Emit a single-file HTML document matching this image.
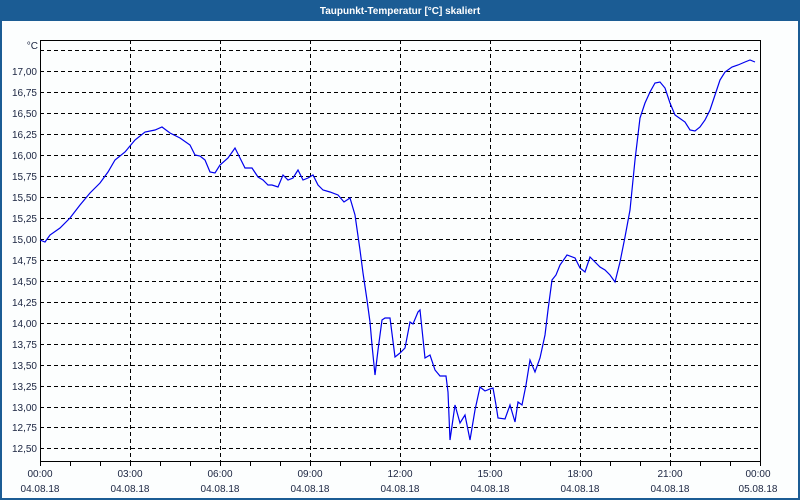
<!DOCTYPE html>
<html><head><meta charset="utf-8"><style>
html,body{margin:0;padding:0;width:800px;height:500px;overflow:hidden;background:#fff}
svg text{font-family:"Liberation Sans","DejaVu Sans",sans-serif;font-size:10px;fill:#1a2440}
</style></head><body>
<svg width="800" height="500" xmlns="http://www.w3.org/2000/svg">
<rect x="0" y="0" width="800" height="500" fill="#1b5c94"/>
<rect x="2" y="21" width="796" height="477" fill="#fcfefe"/>
<text x="400" y="14" text-anchor="middle" style="fill:#fff;font-weight:bold;font-size:10px">Taupunkt-Temperatur [°C] skaliert</text>
<g stroke="#000" stroke-dasharray="4,3" stroke-width="1">
<line x1="40" x2="760" y1="50.5" y2="50.5"/>
<line x1="40" x2="760" y1="71.5" y2="71.5"/>
<line x1="40" x2="760" y1="92.5" y2="92.5"/>
<line x1="40" x2="760" y1="113.5" y2="113.5"/>
<line x1="40" x2="760" y1="134.5" y2="134.5"/>
<line x1="40" x2="760" y1="155.5" y2="155.5"/>
<line x1="40" x2="760" y1="176.5" y2="176.5"/>
<line x1="40" x2="760" y1="197.5" y2="197.5"/>
<line x1="40" x2="760" y1="218.5" y2="218.5"/>
<line x1="40" x2="760" y1="239.5" y2="239.5"/>
<line x1="40" x2="760" y1="260.5" y2="260.5"/>
<line x1="40" x2="760" y1="281.5" y2="281.5"/>
<line x1="40" x2="760" y1="302.5" y2="302.5"/>
<line x1="40" x2="760" y1="323.5" y2="323.5"/>
<line x1="40" x2="760" y1="344.5" y2="344.5"/>
<line x1="40" x2="760" y1="365.5" y2="365.5"/>
<line x1="40" x2="760" y1="386.5" y2="386.5"/>
<line x1="40" x2="760" y1="407.5" y2="407.5"/>
<line x1="40" x2="760" y1="427.5" y2="427.5"/>
<line x1="40" x2="760" y1="448.5" y2="448.5"/>
<line y1="40" y2="461" x1="130.5" x2="130.5"/>
<line y1="40" y2="461" x1="220.5" x2="220.5"/>
<line y1="40" y2="461" x1="310.5" x2="310.5"/>
<line y1="40" y2="461" x1="400.5" x2="400.5"/>
<line y1="40" y2="461" x1="490.5" x2="490.5"/>
<line y1="40" y2="461" x1="580.5" x2="580.5"/>
<line y1="40" y2="461" x1="670.5" x2="670.5"/>
</g>
<rect x="40.5" y="40.5" width="720" height="421" fill="none" stroke="#000"/>
<g stroke="#000">
<path d="M70.5 461v5M100.5 461v5M130.5 461v5M160.5 461v5M190.5 461v5M220.5 461v5M250.5 461v5M280.5 461v5M310.5 461v5M340.5 461v5M370.5 461v5M400.5 461v5M430.5 461v5M460.5 461v5M490.5 461v5M520.5 461v5M550.5 461v5M580.5 461v5M610.5 461v5M640.5 461v5M670.5 461v5M700.5 461v5M730.5 461v5M760.5 461v5M40.5 461v5"/>
</g>
<g text-anchor="end">
<text x="38" y="49">°C</text>
<text x="37" y="75">17,00</text><text x="37" y="96">16,75</text><text x="37" y="117">16,50</text><text x="37" y="138">16,25</text><text x="37" y="159">16,00</text><text x="37" y="180">15,75</text><text x="37" y="201">15,50</text><text x="37" y="222">15,25</text><text x="37" y="243">15,00</text><text x="37" y="264">14,75</text><text x="37" y="285">14,50</text><text x="37" y="306">14,25</text><text x="37" y="327">14,00</text><text x="37" y="348">13,75</text><text x="37" y="369">13,50</text><text x="37" y="390">13,25</text><text x="37" y="411">13,00</text><text x="37" y="431">12,75</text><text x="37" y="452">12,50</text>
</g>
<g text-anchor="middle">
<text x="40" y="477">00:00</text><text x="40" y="492">04.08.18</text>
<text x="130" y="477">03:00</text><text x="130" y="492">04.08.18</text>
<text x="220" y="477">06:00</text><text x="220" y="492">04.08.18</text>
<text x="310" y="477">09:00</text><text x="310" y="492">04.08.18</text>
<text x="400" y="477">12:00</text><text x="400" y="492">04.08.18</text>
<text x="490" y="477">15:00</text><text x="490" y="492">04.08.18</text>
<text x="580" y="477">18:00</text><text x="580" y="492">04.08.18</text>
<text x="670" y="477">21:00</text><text x="670" y="492">04.08.18</text>
<text x="758" y="477">00:00</text><text x="758" y="492">05.08.18</text>
</g>
<polyline fill="none" stroke="#0000ee" stroke-width="1.2" points="40,240 45,242 50,235 60,228 70,218 80,205 90,193 100,183 108,172 115,160 125,152 135,140 145,132 155,130 162,127 170,133 180,138 190,145 195,155 200,156 205,160 210,172 215,173 220,165 228,158 235,148 240,158 245,168 252,168 258,177 263,180 268,185 272,185 278,187 283,175 288,180 293,178 298,170 303,180 308,178 313,175 318,185 323,190 330,192 338,195 344,202 350,198 355,215 360,250 363,273 367,300 370,322 372,345 375,375 378,350 382,320 385,318 390,318 395,357 400,353 405,348 410,322 413,324 418,312 420,310 425,358 430,355 435,370 440,376 446,376 448,392 450,440 455,405 460,423 465,415 470,440 475,410 480,387 485,391 490,389 493,388 496,405 498,418 505,419 510,405 515,422 518,402 522,405 526,385 530,360 535,372 540,358 545,335 548,310 552,280 556,275 560,265 567,255 575,258 580,268 585,272 590,257 595,262 600,267 605,270 610,275 615,282 620,262 625,237 630,210 635,160 640,118 645,103 650,92 655,83 660,82 665,88 670,103 675,115 685,122 690,130 695,131 700,127 705,120 710,110 715,95 720,80 725,72 732,67 738,65 745,62 750,60 755,62"/>
</svg>
</body></html>
